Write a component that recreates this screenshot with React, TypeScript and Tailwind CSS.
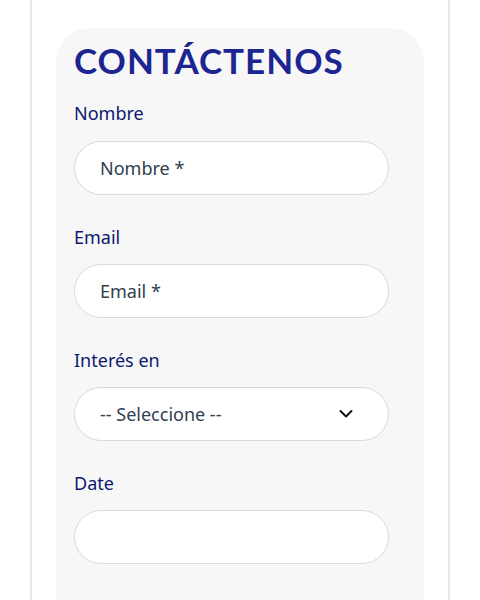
export default function App() {
  const labelCls = 'block text-[18px] leading-[24px] text-[#0d1770]'
  const inputCls =
    'w-full h-[54px] rounded-full border border-[#d5dcdc] bg-white px-[25px] text-[18px] text-[#2f4050] placeholder:text-[#2f4050] outline-none'

  return (
    <div className="h-[600px] overflow-hidden w-[480px] bg-white" style={{ fontFamily: '"Noto Sans", sans-serif' }}>
      <div className="mx-[30px] min-h-[600px] border-x-2 border-[#e3e7ea] px-[24px] pt-[28px]">
        <div className="rounded-[34px] bg-[#f7f7f7] pl-[18px] pr-[35px] pt-[8px] pb-10 min-h-[600px]">
          <h2
            className="text-[35px] leading-[48px] font-bold tracking-[1px] text-[#1c2591]"
            style={{ fontFamily: 'Lato, "Noto Sans", sans-serif' }}
          >
            CONTÁCTENOS
          </h2>

          <div className="mt-[17px]">
            <label className={labelCls}>Nombre</label>
            <input className={inputCls + ' mt-[16px]'} placeholder="Nombre *" />
          </div>

          <div className="mt-[30px]">
            <label className={labelCls}>Email</label>
            <input className={inputCls + ' mt-[15px]'} placeholder="Email *" />
          </div>

          <div className="mt-[30px]">
            <label className={labelCls}>Interés en</label>
            <div className="relative mt-[15px]">
              <div className={inputCls + ' flex items-center'}>-- Seleccione --</div>
              <svg
                className="absolute right-[36px] top-1/2 -translate-y-1/2"
                width="14"
                height="9"
                viewBox="0 0 14 9"
                fill="none"
                stroke="#111"
                strokeWidth="2"
                strokeLinecap="round"
                strokeLinejoin="round"
              >
                <path d="M1.5 1.5 7 7l5.5-5.5" />
              </svg>
            </div>
          </div>

          <div className="mt-[30px]">
            <label className={labelCls}>Date</label>
            <input className={inputCls + ' mt-[15px]'} />
          </div>

          <div className="mt-[31px]">
            <label className={labelCls}>Teléfono</label>
          </div>
        </div>
      </div>
    </div>
  )
}
